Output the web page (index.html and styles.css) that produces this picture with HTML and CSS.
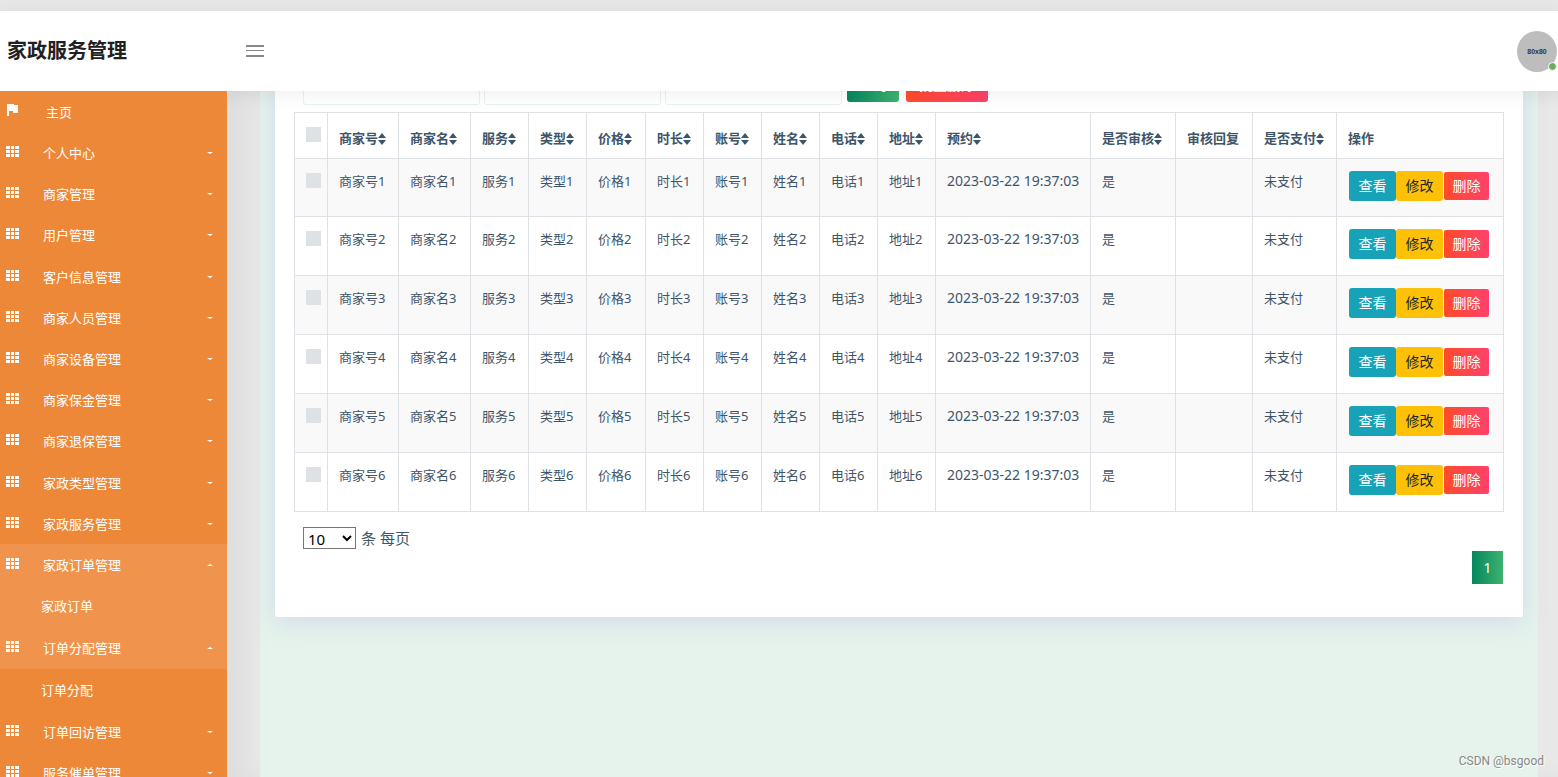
FILE: index.html
```html
<!DOCTYPE html>
<html lang="zh-CN">
<head>
<meta charset="utf-8">
<title>家政服务管理</title>
<link rel="stylesheet" href="styles.css">
</head>
<body>
<svg class="sprite" aria-hidden="true">
  <symbol id="grid" viewBox="0 0 13 11"><path d="M0 0h4v3H0zM5 0h3v3H5zM9 0h4v3H9zM0 4h4v3H0zM5 4h3v3H5zM9 4h4v3H9zM0 8h4v3H0zM5 8h3v3H5zM9 8h4v3H9z"/></symbol>
  <symbol id="sort" viewBox="0 0 8 12"><path d="M4 0 8 5H0zM4 12 0 7h8z"/></symbol>
</svg>
<header class="header">
  <h1 class="brand">家政服务管理</h1>
  <button class="menu-toggle" type="button" aria-label="菜单"><svg width="18" height="12" viewBox="0 0 18 12"><path d="M0 0h18v2H0zM0 5h18v1H0zM0 10h18v2H0z"/></svg></button>
  <div class="avatar">80x80<span class="online"></span></div>
</header>
<div class="layout">
  <nav class="sidebar">
    <a class="item home" href="#"><svg class="icon" viewBox="0 0 13 13"><path d="M1 0h7v1h4v8H7V7H3v5H1z"/></svg><span>主页</span></a>
    <a class="item" href="#"><svg class="icon"><use href="#grid"/></svg><span>个人中心</span><i class="caret"></i></a>
    <a class="item" href="#"><svg class="icon"><use href="#grid"/></svg><span>商家管理</span><i class="caret"></i></a>
    <a class="item" href="#"><svg class="icon"><use href="#grid"/></svg><span>用户管理</span><i class="caret"></i></a>
    <a class="item" href="#"><svg class="icon"><use href="#grid"/></svg><span>客户信息管理</span><i class="caret"></i></a>
    <a class="item" href="#"><svg class="icon"><use href="#grid"/></svg><span>商家人员管理</span><i class="caret"></i></a>
    <a class="item" href="#"><svg class="icon"><use href="#grid"/></svg><span>商家设备管理</span><i class="caret"></i></a>
    <a class="item" href="#"><svg class="icon"><use href="#grid"/></svg><span>商家保金管理</span><i class="caret"></i></a>
    <a class="item" href="#"><svg class="icon"><use href="#grid"/></svg><span>商家退保管理</span><i class="caret"></i></a>
    <a class="item" href="#"><svg class="icon"><use href="#grid"/></svg><span>家政类型管理</span><i class="caret"></i></a>
    <a class="item" href="#"><svg class="icon"><use href="#grid"/></svg><span>家政服务管理</span><i class="caret"></i></a>
    <a class="item active" href="#"><svg class="icon"><use href="#grid"/></svg><span>家政订单管理</span><i class="caret up"></i></a>
    <a class="subitem active" href="#">家政订单</a>
    <a class="item active" href="#"><svg class="icon"><use href="#grid"/></svg><span>订单分配管理</span><i class="caret up"></i></a>
    <a class="subitem" href="#">订单分配</a>
    <a class="item" href="#"><svg class="icon"><use href="#grid"/></svg><span>订单回访管理</span><i class="caret"></i></a>
    <a class="item" href="#"><svg class="icon"><use href="#grid"/></svg><span>服务催单管理</span><i class="caret"></i></a>
  </nav>
  <main class="content">
    <section class="card">
      <form class="filters">
        <input class="field" type="text" aria-label="商家号">
        <input class="field" type="text" aria-label="商家名">
        <input class="field" type="text" aria-label="服务">
        <button class="search" type="button">查询</button>
        <button class="remove" type="button">批量删除</button>
      </form>
      <table class="orders">
        <colgroup><col class="c-check"><col class="c-shop"><col class="c-name"><col class="c-short" span="2"><col class="c-price"><col class="c-short" span="5"><col class="c-date"><col class="c-audit"><col class="c-reply"><col class="c-paid"><col></colgroup>
        <thead>
          <tr>
            <th><input class="tick" type="checkbox" aria-label="全选"></th>
            <th>商家号<svg class="sort"><use href="#sort"/></svg></th>
            <th>商家名<svg class="sort"><use href="#sort"/></svg></th>
            <th>服务<svg class="sort"><use href="#sort"/></svg></th>
            <th>类型<svg class="sort"><use href="#sort"/></svg></th>
            <th>价格<svg class="sort"><use href="#sort"/></svg></th>
            <th>时长<svg class="sort"><use href="#sort"/></svg></th>
            <th>账号<svg class="sort"><use href="#sort"/></svg></th>
            <th>姓名<svg class="sort"><use href="#sort"/></svg></th>
            <th>电话<svg class="sort"><use href="#sort"/></svg></th>
            <th>地址<svg class="sort"><use href="#sort"/></svg></th>
            <th>预约<svg class="sort"><use href="#sort"/></svg></th>
            <th>是否审核<svg class="sort"><use href="#sort"/></svg></th>
            <th>审核回复</th>
            <th>是否支付<svg class="sort"><use href="#sort"/></svg></th>
            <th>操作</th>
          </tr>
        </thead>
        <tbody>
          <tr><td><input class="tick" type="checkbox" aria-label="选择1"></td><td>商家号1</td><td>商家名1</td><td>服务1</td><td>类型1</td><td>价格1</td><td>时长1</td><td>账号1</td><td>姓名1</td><td>电话1</td><td>地址1</td><td class="date">2023-03-22 19:37:03</td><td>是</td><td></td><td>未支付</td><td><div class="actions"><button class="btn view" type="button">查看</button><button class="btn edit" type="button">修改</button><button class="btn delete" type="button">删除</button></div></td></tr>
          <tr><td><input class="tick" type="checkbox" aria-label="选择2"></td><td>商家号2</td><td>商家名2</td><td>服务2</td><td>类型2</td><td>价格2</td><td>时长2</td><td>账号2</td><td>姓名2</td><td>电话2</td><td>地址2</td><td class="date">2023-03-22 19:37:03</td><td>是</td><td></td><td>未支付</td><td><div class="actions"><button class="btn view" type="button">查看</button><button class="btn edit" type="button">修改</button><button class="btn delete" type="button">删除</button></div></td></tr>
          <tr><td><input class="tick" type="checkbox" aria-label="选择3"></td><td>商家号3</td><td>商家名3</td><td>服务3</td><td>类型3</td><td>价格3</td><td>时长3</td><td>账号3</td><td>姓名3</td><td>电话3</td><td>地址3</td><td class="date">2023-03-22 19:37:03</td><td>是</td><td></td><td>未支付</td><td><div class="actions"><button class="btn view" type="button">查看</button><button class="btn edit" type="button">修改</button><button class="btn delete" type="button">删除</button></div></td></tr>
          <tr><td><input class="tick" type="checkbox" aria-label="选择4"></td><td>商家号4</td><td>商家名4</td><td>服务4</td><td>类型4</td><td>价格4</td><td>时长4</td><td>账号4</td><td>姓名4</td><td>电话4</td><td>地址4</td><td class="date">2023-03-22 19:37:03</td><td>是</td><td></td><td>未支付</td><td><div class="actions"><button class="btn view" type="button">查看</button><button class="btn edit" type="button">修改</button><button class="btn delete" type="button">删除</button></div></td></tr>
          <tr><td><input class="tick" type="checkbox" aria-label="选择5"></td><td>商家号5</td><td>商家名5</td><td>服务5</td><td>类型5</td><td>价格5</td><td>时长5</td><td>账号5</td><td>姓名5</td><td>电话5</td><td>地址5</td><td class="date">2023-03-22 19:37:03</td><td>是</td><td></td><td>未支付</td><td><div class="actions"><button class="btn view" type="button">查看</button><button class="btn edit" type="button">修改</button><button class="btn delete" type="button">删除</button></div></td></tr>
          <tr><td><input class="tick" type="checkbox" aria-label="选择6"></td><td>商家号6</td><td>商家名6</td><td>服务6</td><td>类型6</td><td>价格6</td><td>时长6</td><td>账号6</td><td>姓名6</td><td>电话6</td><td>地址6</td><td class="date">2023-03-22 19:37:03</td><td>是</td><td></td><td>未支付</td><td><div class="actions"><button class="btn view" type="button">查看</button><button class="btn edit" type="button">修改</button><button class="btn delete" type="button">删除</button></div></td></tr>
        </tbody>
      </table>
      <div class="page-size">
        <select id="size"><option>10</option><option>25</option><option>50</option></select>
        <label for="size">条 每页</label>
      </div>
      <div class="pager"><button class="page" type="button">1</button></div>
    </section>
  </main>
</div>
<div class="watermark">CSDN @bsgood</div>
</body>
</html>
```
FILE: styles.css
```css
* { box-sizing: border-box; }

body {
  margin: 0;
  padding-top: 11px;
  height: 100vh;
  overflow: hidden;
  display: flex;
  flex-direction: column;
  background: #e8e8e8;
  color: #3e5569;
  font: 13px/20px "Noto Sans", "Noto Sans CJK SC", sans-serif;
}

button, input, select { font-family: inherit; }
.sprite { display: none; }

.header {
  flex: none;
  position: relative;
  z-index: 2;
  height: 80px;
  padding: 0 1px 0 7px;
  display: flex;
  align-items: center;
  background: #fff;
  box-shadow: 0 2px 20px rgba(0, 0, 0, .07);
}

.brand {
  margin: 0;
  width: 239px;
  color: #212121;
  font-size: 20px;
  line-height: 24px;
  font-weight: 700;
}

.menu-toggle {
  display: flex;
  padding: 0;
  border: 0;
  background: none;
  fill: #888;
}

.avatar {
  position: relative;
  margin-left: auto;
  width: 40px;
  height: 41px;
  border-radius: 50%;
  background: #bdbdbd;
  color: #333;
  font: bold 7px/41px "Liberation Sans", sans-serif;
  text-align: center;
}

.online {
  position: absolute;
  right: 0;
  bottom: 1px;
  width: 9px;
  height: 9px;
  border: 1px solid #fff;
  border-radius: 50%;
  background: #6fab63;
}

.layout {
  flex: 1;
  min-height: 0;
  display: flex;
  box-shadow: inset 247px 0 20px rgba(0, 0, 0, .04);
}

.sidebar {
  flex: none;
  z-index: 3;
  width: 227px;
  overflow: hidden;
  background: #ed8839;
}

.sidebar a { color: #fff; text-decoration: none; }

.item {
  display: flex;
  align-items: center;
  height: 41px;
  padding: 0 14px 0 6px;
}

.item:nth-child(5n + 4) { height: 42px; }
.item span { margin-left: 24px; }
.home span { margin-left: 27px; }
.icon { width: 13px; height: 13px; margin-bottom: 3px; fill: #fff; }

.caret {
  margin-left: auto;
  border: 3px solid transparent;
  border-top: 2px solid #fff;
  border-bottom: 0;
}

.caret.up { border-top: 0; border-bottom: 2px solid #fff; }

.subitem {
  display: block;
  height: 42px;
  padding-left: 41px;
  line-height: 42px;
}

.active { background: #f0934c; }

.content {
  flex: 1;
  min-width: 0;
  margin: 0 20px 0 33px;
  padding: 0 15px;
  background: #e5f3ec;
}

.card {
  margin-top: -24px;
  padding: 0 19px 33px;
  border-radius: 2px;
  background: #fff;
  box-shadow: 0 4px 24px rgba(200, 208, 232, .7);
}

.filters {
  display: flex;
  align-items: flex-start;
  gap: 4px;
  padding: 0 9px 7px;
}

.field {
  width: 177px;
  height: 38px;
  border: 1px solid #e5f3ec;
  border-radius: 3px;
  background: transparent;
}

.search, .remove {
  height: 30px;
  margin: 5px 2px 0 1px;
  padding: 0 12px 4px;
  border: 0;
  border-radius: 3px;
  background: linear-gradient(90deg, #04865f, #3eb370);
  color: #fff;
  font-size: 14px;
  line-height: 26px;
}

.remove { padding: 0 13px 4px; background: linear-gradient(90deg, #ff4b2b, #ff416c); }

.orders {
  width: 100%;
  border-collapse: collapse;
  table-layout: fixed;
}

.c-check { width: 33px; }
.c-shop { width: 71px; }
.c-name { width: 72px; }
.c-short { width: 58px; }
.c-price { width: 59px; }
.c-date { width: 155px; }
.c-audit { width: 85px; }
.c-reply { width: 77px; }
.c-paid { width: 84px; }

th, td {
  padding: 12px 0 0 11px;
  border: 1px solid #dee2e6;
  text-align: left;
  vertical-align: top;
  white-space: nowrap;
}

th { height: 46px; padding-top: 15px; font-weight: 700; }
td { height: 59px; }
tbody tr:first-child td { height: 58px; }
tbody tr:nth-child(odd) { background: #f9f9f9; }
.date { font-size: 14px; }

.tick {
  display: block;
  appearance: none;
  width: 15px;
  height: 15px;
  margin: 2px 0 0;
  background: #dee2e6;
}

th .tick { margin-top: -1px; }

.sort { width: 8px; height: 12px; vertical-align: -2px; fill: #3e5569; }

.actions { display: flex; align-items: center; padding-left: 1px; }

.btn {
  width: 47px;
  height: 30px;
  padding: 0 0 2px;
  border: 0;
  border-radius: 3px;
  color: #fff;
  font-size: 14px;
}

.view { background: #17a2b8; }
.edit { background: #ffc107; color: #212529; }

.delete {
  width: 45px;
  height: 28px;
  margin-left: 1px;
  border-radius: 2px;
  background: linear-gradient(90deg, #ff4b2b, #ff416c);
}

.page-size {
  display: flex;
  align-items: center;
  gap: 5px;
  padding: 15px 9px 0;
  font-size: 15px;
  line-height: 22px;
}

.page-size select {
  width: 53px;
  height: 22px;
  padding: 0 0 2px;
  border: 1px solid #767676;
  background: #fff;
  color: #000;
  font-size: 15px;
}

.pager { display: flex; justify-content: flex-end; padding: 2px 1px 0 0; }

.page {
  width: 31px;
  height: 33px;
  padding: 0;
  border: 0;
  background: linear-gradient(90deg, #04865f, #3eb370);
  color: #fff;
  font-size: 14px;
}

.watermark {
  position: absolute;
  z-index: 4;
  right: 14px;
  bottom: 6px;
  color: #888;
  font: 12px/20px Roboto, sans-serif;
  text-shadow: 1px 1px 0 #fff;
}
```
